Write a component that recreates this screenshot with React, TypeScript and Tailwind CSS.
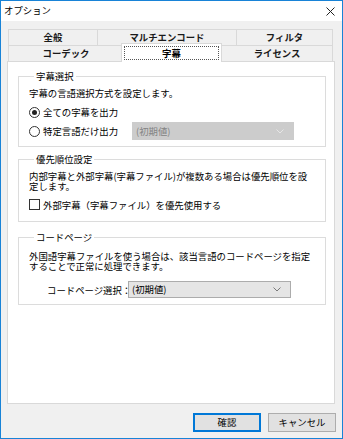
import { ReactNode } from 'react';

const FONT = "font-['Noto_Sans_CJK_JP','Noto_Sans',sans-serif]";

function Chevron({ color }: { color: string }) {
  return (
    <svg width="8" height="5" viewBox="0 0 8 5" className="shrink-0">
      <polyline points="0.5,0.5 4,4 7.5,0.5" fill="none" stroke={color} strokeWidth="1" />
    </svg>
  );
}

function Group({ label, className, children }: { label: string; className?: string; children: ReactNode }) {
  return (
    <fieldset className={`ml-[10px] w-[308px] border border-[#dcdcdc] px-[10px] ${className ?? ''}`}>
      <legend className="ml-[5px] px-[2px] text-[9.4px] leading-[12px] text-black">{label}</legend>
      {children}
    </fieldset>
  );
}

function Tab({ label, width, last }: { label: string; width: string; last?: boolean }) {
  return (
    <div
      className={`flex h-[16px] items-center justify-center border-l border-t border-[#d9d9d9] bg-[#f0f0f0] text-[9.4px] font-bold text-[#1a1a1a] ${width} ${last ? 'border-r' : ''}`}
    >
      {label}
    </div>
  );
}

export default function App() {
  return (
    <div className={`flex h-[439px] w-[343px] flex-col border border-[#1883d7] bg-[#f0f0f0] ${FONT}`}>
      {/* タイトルバー */}
      <div className="flex h-[20px] shrink-0 items-center justify-between bg-white pl-[3px] pr-[7px]">
        <span className="text-[9.4px] leading-none text-black">オプション</span>
        <svg width="9" height="9" viewBox="0 0 9 9">
          <path d="M0.5 0.5 L8.5 8.5 M8.5 0.5 L0.5 8.5" stroke="#222" strokeWidth="1" />
        </svg>
      </div>

      <div className="flex flex-1 flex-col pl-[6px] pr-[6px] pt-[8px]">
        {/* タブ */}
        <div className="ml-[1px] flex w-[325px]">
          <Tab label="全般" width="w-[89px]" />
          <Tab label="マルチエンコード" width="w-[139px]" />
          <Tab label="フィルタ" width="w-[97px]" last />
        </div>
        <div className="relative z-10 ml-[1px] flex w-[325px]">
          <Tab label="コーデック" width="w-[115px]" />
          <div className="-mb-[1px] -ml-[2px] -mt-[2px] flex h-[19px] w-[101px] items-stretch border border-b-0 border-[#d9d9d9] bg-white px-[2px] pb-[2px] pt-[2px]">
            <div className="flex flex-1 items-center justify-center border border-dotted border-[#555] text-[9.4px] font-bold text-black">
              字幕
            </div>
          </div>
          <div className="flex h-[16px] w-[111px] items-center justify-center border-r border-t border-[#d9d9d9] text-[9.4px] font-bold text-[#1a1a1a]">
            ライセンス
          </div>
        </div>

        {/* パネル */}
        <div className="h-[343px] w-[328px] border border-[#d9d9d9] bg-white pt-[8px] text-[9.4px] text-black">
          <Group label="字幕選択" className="pb-[6px]">
            <div className="pt-[5px] leading-[12px]">字幕の言語選択方式を設定します。</div>
            <div className="mt-[7px] flex h-[12px] items-center gap-[3px]">
              <span className="flex h-[11px] w-[11px] items-center justify-center rounded-full border border-[#333] bg-white">
                <span className="h-[5px] w-[5px] rounded-full bg-[#222]" />
              </span>
              <span className="leading-[12px]">全ての字幕を出力</span>
            </div>
            <div className="mt-[4px] flex h-[18px] items-center gap-[3px]">
              <span className="h-[11px] w-[11px] rounded-full border border-[#333] bg-white" />
              <span className="w-[86px] leading-[12px]">特定言語だけ出力</span>
              <div className="flex h-[18px] w-[162px] items-center justify-between border border-[#cccccc] bg-[#cccccc] pl-[3px] pr-[9px] text-[#838383]">
                <span>(初期値)</span>
                <Chevron color="#e6e6e6" />
              </div>
            </div>
          </Group>

          <Group label="優先順位設定" className="mt-[6px] pb-[11px]">
            <div className="whitespace-nowrap pt-[7px] leading-[9.5px]">
              内部字幕と外部字幕(字幕ファイル)が複数ある場合は優先順位を設
              <br />
              定します。
            </div>
            <div className="mt-[8px] flex h-[11px] items-center gap-[3px]">
              <span className="h-[11px] w-[11px] border border-[#333] bg-white" />
              <span className="leading-[12px]">外部字幕（字幕ファイル）を優先使用する</span>
            </div>
          </Group>

          <Group label="コードページ" className="mt-[9px] pb-[6px]">
            <div className="whitespace-nowrap pt-[9px] leading-[9.5px]">
              外国語字幕ファイルを使う場合は、該当言語のコードページを指定
              <br />
              することで正常に処理できます。
            </div>
            <div className="mt-[10px] flex h-[17px] items-center pl-[18px]">
              <span className="w-[81px] whitespace-nowrap leading-[12px]">コードページ選択：</span>
              <div className="flex h-[17px] w-[163px] items-center justify-between border border-[#acacac] bg-[#e5e5e5] pl-[3px] pr-[9px]">
                <span>(初期値)</span>
                <Chevron color="#7a7a7a" />
              </div>
            </div>
          </Group>
        </div>

        {/* ボタン */}
        <div className="mt-[9px] flex justify-end gap-[7px]">
          <button className="flex h-[19px] w-[68px] items-center justify-center border-2 border-[#0078d7] bg-[#e1e1e1] text-[9.4px] text-black">
            確認
          </button>
          <button className="flex h-[19px] w-[68px] items-center justify-center border border-[#adadad] bg-[#e1e1e1] text-[9.4px] text-black">
            キャンセル
          </button>
        </div>
      </div>
    </div>
  );
}
